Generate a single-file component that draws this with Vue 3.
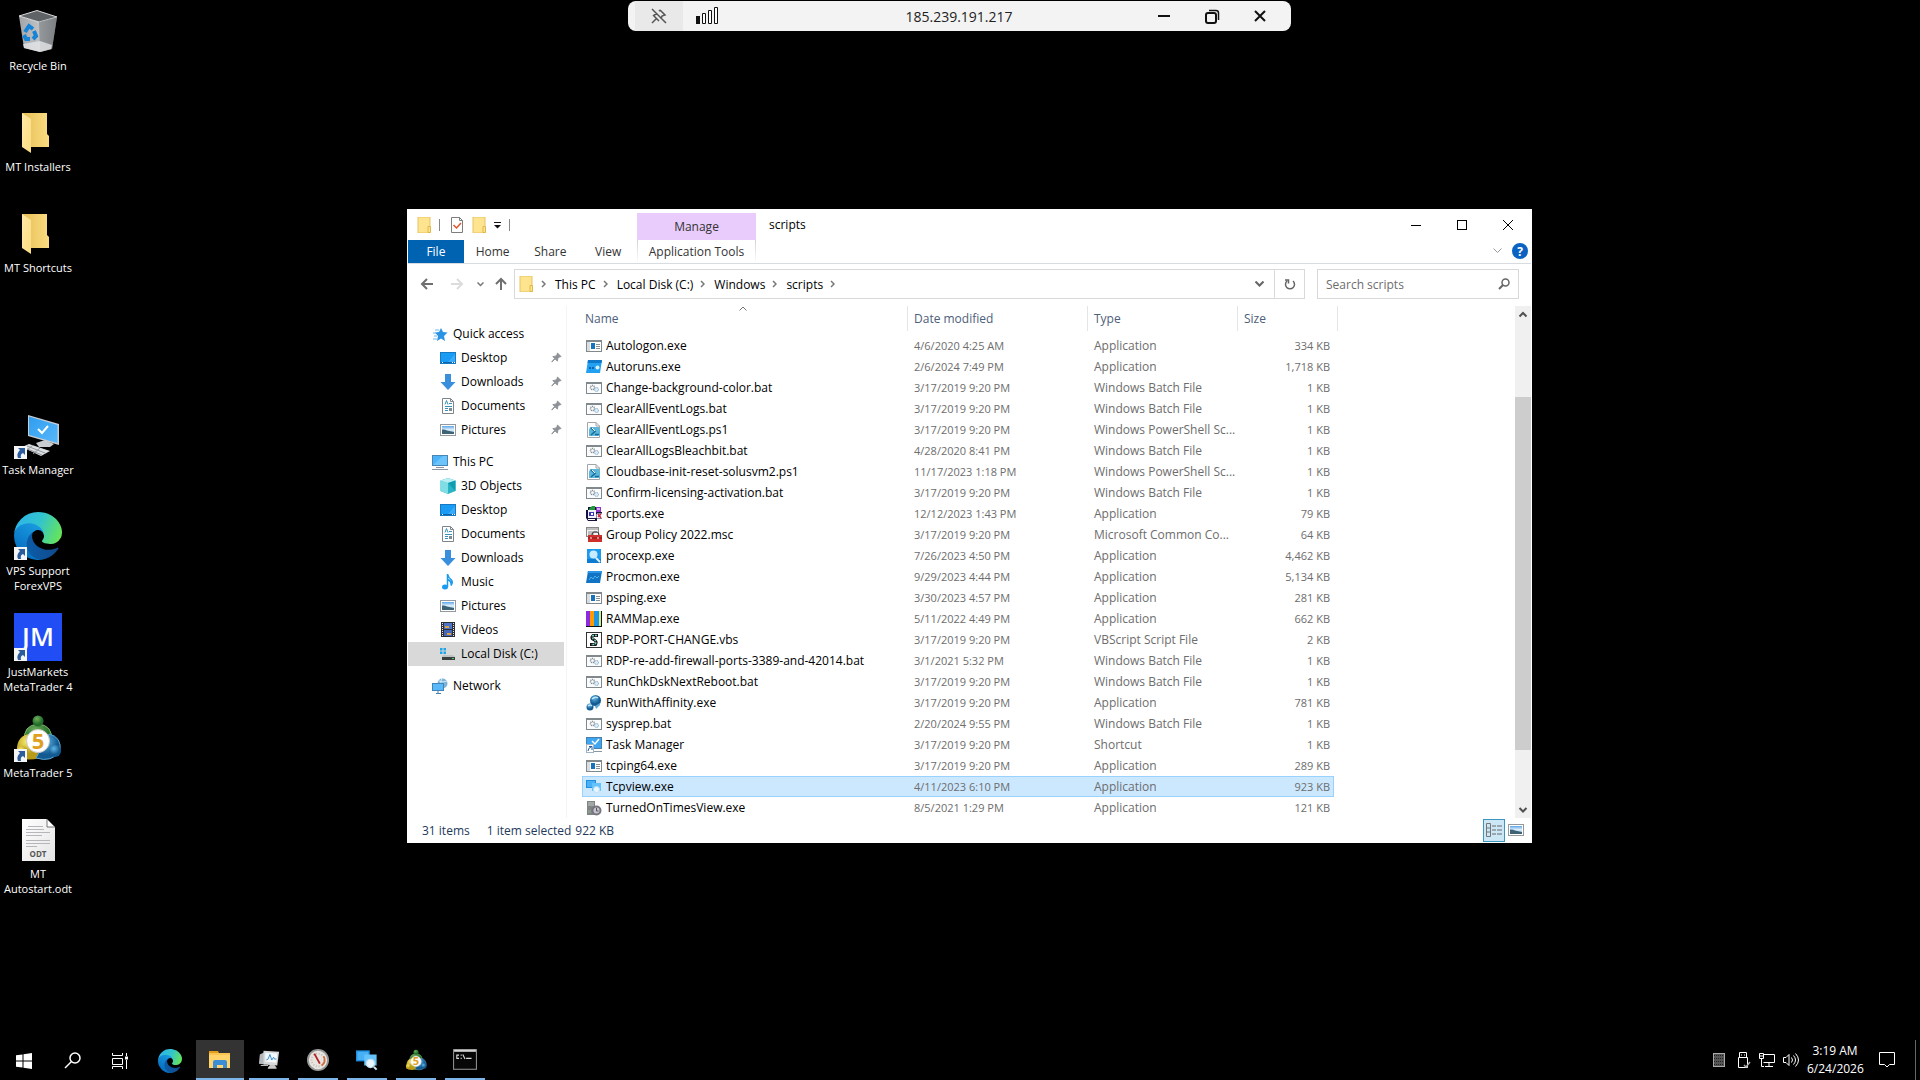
<script setup>
import { ref } from 'vue'

const shortcuts = [
  { label: 'Recycle Bin', icon: 'recycle' },
  { label: 'MT Installers', icon: 'folder-open' },
  { label: 'MT Shortcuts', icon: 'folder-open' },
  null,
  { label: 'Task Manager', icon: 'taskmgr', link: true },
  { label: 'VPS Support ForexVPS', icon: 'edge', link: true },
  { label: 'JustMarkets MetaTrader 4', icon: 'jm', mark: 'JM', link: true },
  { label: 'MetaTrader 5', icon: 'mt5', mark: '5', link: true },
  { label: 'MT Autostart.odt', icon: 'odt', mark: 'ODT' },
]

const tabs = ['Home', 'Share', 'View']
const crumbs = ['This PC', 'Local Disk (C:)', 'Windows', 'scripts']

const tree = [
  {
    label: 'Quick access', icon: 'star', children: [
      { label: 'Desktop', icon: 'desktop', pinned: true },
      { label: 'Downloads', icon: 'download', pinned: true },
      { label: 'Documents', icon: 'document', pinned: true },
      { label: 'Pictures', icon: 'picture', pinned: true },
    ],
  },
  {
    label: 'This PC', icon: 'pc', children: [
      { label: '3D Objects', icon: 'cube' },
      { label: 'Desktop', icon: 'desktop' },
      { label: 'Documents', icon: 'document' },
      { label: 'Downloads', icon: 'download' },
      { label: 'Music', icon: 'music' },
      { label: 'Pictures', icon: 'picture' },
      { label: 'Videos', icon: 'video' },
      { label: 'Local Disk (C:)', icon: 'disk', active: true },
    ],
  },
  { label: 'Network', icon: 'network', children: [] },
]

const APP = 'Application'
const BAT = 'Windows Batch File'
const PS = 'Windows PowerShell Sc...'
const files = [
  ['Autologon.exe', 'exe', '4/6/2020 4:25 AM', APP, '334 KB'],
  ['Autoruns.exe', 'autoruns', '2/6/2024 7:49 PM', APP, '1,718 KB'],
  ['Change-background-color.bat', 'bat', '3/17/2019 9:20 PM', BAT, '1 KB'],
  ['ClearAllEventLogs.bat', 'bat', '3/17/2019 9:20 PM', BAT, '1 KB'],
  ['ClearAllEventLogs.ps1', 'ps', '3/17/2019 9:20 PM', PS, '1 KB'],
  ['ClearAllLogsBleachbit.bat', 'bat', '4/28/2020 8:41 PM', BAT, '1 KB'],
  ['Cloudbase-init-reset-solusvm2.ps1', 'ps', '11/17/2023 1:18 PM', PS, '1 KB'],
  ['Confirm-licensing-activation.bat', 'bat', '3/17/2019 9:20 PM', BAT, '1 KB'],
  ['cports.exe', 'cports', '12/12/2023 1:43 PM', APP, '79 KB'],
  ['Group Policy 2022.msc', 'msc', '3/17/2019 9:20 PM', 'Microsoft Common Co...', '64 KB'],
  ['procexp.exe', 'procexp', '7/26/2023 4:50 PM', APP, '4,462 KB'],
  ['Procmon.exe', 'procmon', '9/29/2023 4:44 PM', APP, '5,134 KB'],
  ['psping.exe', 'exe', '3/30/2023 4:57 PM', APP, '281 KB'],
  ['RAMMap.exe', 'rammap', '5/11/2022 4:49 PM', APP, '662 KB'],
  ['RDP-PORT-CHANGE.vbs', 'vbs', '3/17/2019 9:20 PM', 'VBScript Script File', '2 KB'],
  ['RDP-re-add-firewall-ports-3389-and-42014.bat', 'bat', '3/1/2021 5:32 PM', BAT, '1 KB'],
  ['RunChkDskNextReboot.bat', 'bat', '3/17/2019 9:20 PM', BAT, '1 KB'],
  ['RunWithAffinity.exe', 'affinity', '3/17/2019 9:20 PM', APP, '781 KB'],
  ['sysprep.bat', 'bat', '2/20/2024 9:55 PM', BAT, '1 KB'],
  ['Task Manager', 'tmlink', '3/17/2019 9:20 PM', 'Shortcut', '1 KB'],
  ['tcping64.exe', 'exe', '3/17/2019 9:20 PM', APP, '289 KB'],
  ['Tcpview.exe', 'tcpview', '4/11/2023 6:10 PM', APP, '923 KB'],
  ['TurnedOnTimesView.exe', 'server', '8/5/2021 1:29 PM', APP, '121 KB'],
].map(([name, icon, date, type, size]) => ({ name, icon, date, type, size }))

const selected = ref('Tcpview.exe')
const search = ref('')

const running = [
  { label: 'Process monitor', icon: 'perfmon' },
  { label: 'Gauge', icon: 'gauge' },
  { label: 'TCPView', icon: 'tcpview' },
  { label: 'MetaTrader 5', icon: 'mt5', mark: '5' },
  { label: 'Command Prompt', icon: 'cmd' },
]
const tray = ['grid', 'usb', 'lan', 'sound']
</script>

<template>
  <div class="shell">
    <svg class="sprite" aria-hidden="true">
      <defs>
        <linearGradient id="g-bin" x1="0" x2="1"><stop offset="0" stop-color="#a3a6a9" /><stop offset=".55" stop-color="#c0c2c4" /><stop offset="1" stop-color="#83868a" /></linearGradient>
        <linearGradient id="g-flap" x1="0" x2="1" y2="1"><stop offset="0" stop-color="#ffe9a6" /><stop offset="1" stop-color="#fbdc82" /></linearGradient>
        <linearGradient id="g-fold" x1="0" x2="1"><stop offset="0" stop-color="#e6bf55" /><stop offset="1" stop-color="#fbdc82" /></linearGradient>
        <linearGradient id="g-scr" x1="0" x2="1" y2="1"><stop offset="0" stop-color="#2f9df0" /><stop offset="1" stop-color="#58b8fa" /></linearGradient>
        <linearGradient id="g-land" x1="0" y1="0" x2="0" y2="1"><stop offset="0" stop-color="#5fa6e8" /><stop offset=".45" stop-color="#dbeefb" /><stop offset="1" stop-color="#9cc1d6" /></linearGradient>
        <linearGradient id="g-e1" x1=".2" x2="1"><stop offset="0" stop-color="#0c59a4" /><stop offset="1" stop-color="#114a8b" /></linearGradient>
        <linearGradient id="g-e2" x1=".7" y1="0" x2=".2" y2="1"><stop offset="0" stop-color="#1b9de2" /><stop offset=".5" stop-color="#0f82cf" /><stop offset="1" stop-color="#0067b8" /></linearGradient>
        <linearGradient id="g-e3" x1="0" y1=".3" x2="1" y2=".6"><stop offset="0" stop-color="#2cb5ea" /><stop offset=".5" stop-color="#32c4cd" /><stop offset="1" stop-color="#66e45a" /></linearGradient>
        <radialGradient id="g-grn" cx=".4" cy=".3"><stop offset="0" stop-color="#6fae5c" /><stop offset="1" stop-color="#24702b" /></radialGradient>
        <radialGradient id="g-yel" cx=".4" cy=".3"><stop offset="0" stop-color="#f4e86c" /><stop offset="1" stop-color="#b89a17" /></radialGradient>
        <radialGradient id="g-blu" cx=".4" cy=".3"><stop offset="0" stop-color="#5fb6e6" /><stop offset="1" stop-color="#135a91" /></radialGradient>
        <linearGradient id="g-doc" x1="0" x2="1" y2="1"><stop offset="0" stop-color="#fff" /><stop offset="1" stop-color="#e4e4e4" /></linearGradient>
      </defs>

      <symbol id="i-recycle" viewBox="0 0 48 48">
        <path d="M5 9 25 15 43 10 38 42 26 45 10 41Z" fill="url(#g-bin)" />
        <path d="M5 9 23 3.500 43 10 25 15Z" fill="#606366" stroke="#dcdde0" />
        <path d="M25 15 26 45 38 42 43 10Z" fill="#777b7f" opacity=".6" />
        <path d="M9 37 26 34 38 38 37 42 26 45 10 41Z" fill="#e4e5e7" opacity=".8" />
        <g fill="none" stroke="#1483d8" stroke-width="4"><path d="M11 25l4-6 4 3M20 24l2 5-3 3M16 32h-4l-2-4" /></g>
      </symbol>
      <symbol id="i-folder-open" viewBox="0 0 48 48">
        <path d="M8 5H33V26L35 28V39H15Z" fill="url(#g-fold)" />
        <path d="M8 5 17 11V45L8 39Z" fill="url(#g-flap)" />
      </symbol>
      <symbol id="i-taskmgr" viewBox="0 0 48 48">
        <path d="M14 4 45 13V34L14 25Z" fill="#c8cdd2" />
        <path d="M15 5.500 43.500 14V32L15 24Z" fill="url(#g-scr)" />
        <path d="M24 18l4 4 6-7" fill="none" stroke="#fff" stroke-width="2" />
        <path d="M22 32 31 29 40 33 36 36H25Z" fill="#c9cdd1" />
        <path d="M15 33 36 40 27 45 8 36Z" fill="#dcdfe2" />
        <path d="M13 35 31 42M11 37 28 44M19 34 13 39M26 37 19 43" stroke="#92979c" />
      </symbol>
      <symbol id="i-edge" viewBox="0 0 256 256">
        <g transform="translate(-4.610 -4.920)"><path d="M235.680 195.490a93.730 93.730 0 0 1-10.540 4.710 101.870 101.870 0 0 1-35.900 6.460c-47.320 0-88.540-32.550-88.540-74.320A31.480 31.480 0 0 1 117.130 105c-42.800 1.800-53.800 46.400-53.800 72.530 0 73.880 68.090 81.370 82.760 81.370 7.910 0 19.840-2.300 27-4.560l1.310-.440a128.340 128.340 0 0 0 66.600-52.800 4 4 0 0 0-5.320-5.610z" fill="url(#g-e1)" /></g>
        <path d="M105.730 241.420a79.200 79.200 0 0 1-22.740-21.340 80.720 80.720 0 0 1 29.530-120c3.120-1.470 8.450-4.130 15.540-4a32.350 32.350 0 0 1 25.690 13 31.880 31.880 0 0 1 6.360 18.660c0-.210 24.460-79.600-80-79.600-43.900 0-80 41.660-80 78.210a130.150 130.150 0 0 0 12.110 56 128 128 0 0 0 156.380 67.110 75.550 75.550 0 0 1-62.780-8z" fill="url(#g-e2)" />
        <path d="M152.330 148.860c-.810 1.050-3.300 2.500-3.300 5.660 0 2.610 1.700 5.120 4.720 7.230 14.380 10 41.490 8.680 41.560 8.680a59.560 59.560 0 0 0 30.270-8.350A61.380 61.380 0 0 0 256 109.200c.260-22.410-8-37.310-11.340-43.910C223.460 23.840 177.720 0 128 0A128 128 0 0 0 0 126.200c.480-36.540 36.800-66.050 80-66.050 3.500 0 23.460.340 42 10.070 16.340 8.580 24.900 18.940 30.850 29.210 6.180 10.670 7.280 24.150 7.280 29.520s-2.740 13.330-7.800 19.910z" fill="url(#g-e3)" />
      </symbol>
      <symbol id="i-jm" viewBox="0 0 48 48"><rect width="48" height="48" fill="#204ef4" /></symbol>
      <symbol id="i-mt5" viewBox="0 0 48 48">
        <path d="M10 28Q9 11 24 10 39 11 38 28Z" fill="url(#g-grn)" stroke="#7fb870" />
        <path d="M3 42Q1 22 15 20L26 44Q10 48 3 42Z" fill="url(#g-yel)" />
        <path d="M46 37Q48 23 35 20L22 44Q38 49 46 37Z" fill="url(#g-blu)" stroke="#5aa6d4" />
        <circle cx="24" cy="7" r="5.500" fill="url(#g-grn)" />
        <circle cx="8" cy="38" r="6" fill="url(#g-yel)" />
        <circle cx="41" cy="37" r="6" fill="url(#g-blu)" />
        <circle cx="24" cy="27" r="11.500" fill="#fff" stroke="#c9c9c9" />
      </symbol>
      <symbol id="i-odt" viewBox="0 0 48 48">
        <path d="M8 4H33L41 12V46H8Z" fill="url(#g-doc)" />
        <path d="M33 4V12H41Z" fill="#fff" stroke="#555" stroke-width=".800" />
        <path d="M14 11.500H29M12 14.500H30M12 17.500H36M12 20.500H28M12 25.500H36M12 28.500H36M12 31.500H23" stroke="#b4b6bb" />
      </symbol>
      <symbol id="i-arrow" viewBox="0 0 13 13">
        <rect width="13" height="13" fill="#f5f5f5" />
        <path d="M4 2H11V9L9 7Q6 8 7 12H4Q2 8 6 4Z" fill="#2c5c9c" />
      </symbol>

      <symbol id="i-folder" viewBox="0 0 16 16">
        <path d="M2 0H14V16H2Z" fill="#ffe48f" stroke="#e5c365" />
        <path d="M12 9.500H14.500V15.500H12Z" fill="#ffe48f" stroke="#dfb84a" />
      </symbol>
      <symbol id="i-props" viewBox="0 0 16 16">
        <path d="M2.500.500H10.500L13.500 3.500V15.500H2.500Z" fill="#fff" stroke="#7d7d7d" />
        <path d="M10.500.500V3.500H13.500" fill="none" stroke="#7d7d7d" />
        <path d="M4.500 8l3 3 4.500-5" fill="none" stroke="#e0532b" stroke-width="1.500" />
      </symbol>
      <symbol id="i-star" viewBox="0 0 16 16">
        <path d="M9 2l2 4 4.500.500-3.500 3.500 1 5L9 12.500 5 15 6 10 3 6.500 7 6Z" fill="#2b93e4" />
        <path d="M3 4h4M1 7h3M2 10h3M1 13h4" stroke="#6db8ef" />
      </symbol>
      <symbol id="i-desktop" viewBox="0 0 16 16">
        <rect x=".500" y="2.500" width="15" height="11" fill="#1a9bf4" stroke="#1579c4" />
        <path d="M7 13 15 4V13Z" fill="#3aabfb" /><path d="M1 12.500H15" stroke="#0b64a8" /><path d="M2 12.500h1M12 12.500h1M14 12.500h1" stroke="#fff" />
      </symbol>
      <symbol id="i-download" viewBox="0 0 16 16"><path d="M5 0H11V8H15.500L8 16 .500 8H5Z" fill="#3a8fdd" /></symbol>
      <symbol id="i-document" viewBox="0 0 16 16">
        <path d="M2.500.500H10.500L13.500 3.500V15.500H2.500Z" fill="#fff" stroke="#7d868c" />
        <path d="M10.500.500V3.500H13.500" fill="none" stroke="#7d868c" />
        <path d="M5 6.500 6.500 2.500 8 6.500M9 5.500h3M5 8.500h7M5 10.500h3M5 12.500h3" stroke="#3b8fb8" fill="none" />
        <rect x="9" y="10" width="3" height="3" fill="#7a8c96" />
      </symbol>
      <symbol id="i-picture" viewBox="0 0 16 16">
        <rect x=".500" y="2.500" width="15" height="11" fill="#fff" stroke="#93999e" />
        <rect x="2" y="4" width="12" height="8" fill="url(#g-land)" />
        <path d="M2 7.500Q5 7 7 8.500L14 10V12H2Z" fill="#3e6377" />
      </symbol>
      <symbol id="i-pc" viewBox="0 0 16 16">
        <rect x=".500" y="1.500" width="15" height="10" fill="#4db3f8" stroke="#4786b4" />
        <path d="M1 11 11 2H15V11Z" fill="#6cc4fb" /><path d="M4 13.500h8M0 15.500h16" stroke="#8b93a0" />
      </symbol>
      <symbol id="i-cube" viewBox="0 0 16 16">
        <path d="M8 0 15.500 2.500V13L8 16 .500 13V2.500Z" fill="#29b3c4" />
        <path d="M.500 2.500 8 5V16L.500 13Z" fill="#7fdde6" /><path d="M8 0 15.500 2.500 8 5 .500 2.500Z" fill="#b9eef3" /><path d="M8 5 15.500 2.500V13Z" fill="#119db0" />
      </symbol>
      <symbol id="i-music" viewBox="0 0 16 16">
        <ellipse cx="5" cy="13" rx="3" ry="2.500" fill="#1a9bf0" /><path d="M7.500 13V0Q8 3 11 5.500 13.500 8 11 11.500 12 7.500 8 5.500" fill="none" stroke="#1a9bf0" stroke-width="1.500" />
      </symbol>
      <symbol id="i-video" viewBox="0 0 16 16">
        <rect x="1" y="0" width="14" height="15" fill="#2d2d35" />
        <rect x="4" y="1" width="8" height="6" fill="#4c74c8" /><rect x="4" y="8" width="8" height="6" fill="#4569b8" />
        <path d="M5 4h4v2H5ZM7 11h4v2H7Z" fill="#e3a13a" />
        <path d="M2.500 1V15M13.500 1V15" stroke="#e8e8e8" stroke-dasharray="1 1" />
      </symbol>
      <symbol id="i-disk" viewBox="0 0 16 16">
        <path d="M0 2h2.500v2.500H0ZM3.500 2H6v2.500H3.500ZM0 5.500h2.500V8H0ZM3.500 5.500H6V8H3.500Z" fill="#1fa6e8" />
        <path d="M3 9H13L15 11H2Z" fill="#bfc3c3" /><rect x="2" y="11" width="13" height="3" fill="#3b3f40" /><rect x="12" y="12" width="2" height="1" fill="#48d05c" />
      </symbol>
      <symbol id="i-network" viewBox="0 0 16 16">
        <circle cx="10.500" cy="5.500" r="5" fill="#7fb4d6" /><path d="M7 3q4 2 8 0M10 .500q-3 5 1 10" stroke="#d5ebf7" fill="none" />
        <rect x=".500" y="5.500" width="11" height="7" fill="#5bb9fa" stroke="#3d84ba" /><path d="M4 15.500h5M6 13v2" stroke="#4a7fa5" />
      </symbol>
      <symbol id="i-pin" viewBox="0 0 12 12"><path d="M7 1l4 4-2 .500L7.500 7 7 10 4.500 7.500 1 11 1 10.500 4 7 2 5l3-.500L6.500 3Z" fill="#8d9297" stroke="#8d9297" /></symbol>

      <symbol id="i-exe" viewBox="0 0 16 16">
        <rect x=".500" y="2.500" width="15" height="11" fill="#fff" stroke="#82898d" /><path d="M0 3h16" stroke="#82898d" stroke-width="2" />
        <rect x="1" y="4" width="3" height="9" fill="#d9dde0" /><rect x="5" y="5" width="4" height="6" fill="#1572bd" /><path d="M10 6.500h4M10 8.500h4M10 10.500h4" stroke="#888e92" />
      </symbol>
      <symbol id="i-bat" viewBox="0 0 16 16">
        <rect x=".500" y="2.500" width="15" height="11" fill="#fbfcfd" stroke="#82898d" /><path d="M0 3h16" stroke="#82898d" stroke-width="2" />
        <circle cx="6.500" cy="7.500" r="2" fill="none" stroke="#848d93" stroke-width="1.500" stroke-dasharray="1 .600" />
        <circle cx="10.500" cy="9.500" r="2" fill="#dcecf8" stroke="#82a9c6" stroke-dasharray="1 .500" />
      </symbol>
      <symbol id="i-ps" viewBox="0 0 16 16">
        <path d="M1.500.500H10L13.500 4V15.500H1.500Z" fill="#fff" stroke="#a0a6aa" /><path d="M10 .500V4H13.500" fill="none" stroke="#a0a6aa" />
        <path d="M4 5H13L14 8V13L12 14H3V8Z" fill="#5cb6da" /><path d="M5 6 9 9.500 5 13M9 12.500h4" stroke="#166c9c" stroke-width="1.500" fill="none" /><path d="M6 6 9 9" stroke="#fff" />
      </symbol>
      <symbol id="i-autoruns" viewBox="0 0 16 16">
        <path d="M2 1H16L14 14H0Z" fill="#22a0f2" /><path d="M2 1H16L15.500 4H1.500Z" fill="#0f78c8" /><path d="M3 8h2v2H3ZM6 8h2v2H6Z" fill="#0b65b5" /><circle cx="11.500" cy="8.500" r="2" fill="#d9f0ff" />
      </symbol>
      <symbol id="i-procmon" viewBox="0 0 16 16">
        <path d="M2 2H16L14 14H0Z" fill="#1173c4" /><path d="M2 2H16L15.500 4H1.500Z" fill="#2b95e6" /><path d="M3 11l2-3 2 2 2-3 2 2 2-2" fill="none" stroke="#4baeee" />
      </symbol>
      <symbol id="i-procexp" viewBox="0 0 16 16">
        <rect x="1" y="1" width="14" height="14" fill="#1b9af0" /><path d="M1 11h14v4H1Z" fill="#0d7cd0" /><circle cx="7.500" cy="6.500" r="4" fill="#c8ebff" /><path d="M10 10l4 4" stroke="#d9f1ff" stroke-width="2" />
      </symbol>
      <symbol id="i-cports" viewBox="0 0 16 16">
        <path d="M0 4H2V1H15V6H16V13H11V15H2L0 12Z" fill="#15123c" /><path d="M3 3 6 0H9V4H3Z" fill="#1f9b3a" /><rect x="10" y="1" width="5" height="5" fill="#8f35c9" /><rect x="11" y="2" width="3" height="2" fill="#d9b2f2" />
        <rect x="2" y="4" width="8" height="8" fill="#f1f1f8" /><rect x="3" y="6" width="5" height="4" fill="#3a35c2" /><rect x="5" y="7" width="2" height="2" fill="#fff" /><path d="M2 13.500h7M11 8h5v4h-5Z" stroke="#fff" fill="#fff" /><path d="M12 8l3 4M15 8l-3 3" stroke="#c42a4a" stroke-width="1.500" />
      </symbol>
      <symbol id="i-msc" viewBox="0 0 16 16">
        <rect x=".500" y=".500" width="12" height="9" fill="#f3f3f3" stroke="#888" /><path d="M0 2h13M2 5h9M2 7h6" stroke="#888" stroke-width="1" />
        <path d="M6 8Q6 5 8 5h3q2 0 2 3" fill="none" stroke="#333" /><rect x="2" y="8" width="14" height="7" fill="#cf2f2b" /><path d="M2 11h14" stroke="#8f1513" /><path d="M5 10v2M12 10v2" stroke="#fff" />
      </symbol>
      <symbol id="i-rammap" viewBox="0 0 16 16">
        <rect width="16" height="16" fill="#111" /><path d="M0 0h4v15H0Z" fill="#8a2be2" /><path d="M4 0h4v15H4Z" fill="#ff9a00" /><path d="M8 0h5v15H8Z" fill="#1e96e8" /><path d="M13 0h2v15h-2Z" fill="#d7ee7a" />
      </symbol>
      <symbol id="i-vbs" viewBox="0 0 16 16">
        <rect x=".500" y=".500" width="15" height="15" fill="#fff" stroke="#333" /><path d="M12 3.500H7Q4.500 6 7.500 7.500q4 2 2 5H4" fill="none" stroke="#111" stroke-width="3" /><path d="M11 3.500H7Q5.500 6 8 7.500q3 2 1 5H5" fill="none" stroke="#7fd6c9" stroke-dasharray="2 1" stroke-width="1.500" />
      </symbol>
      <symbol id="i-affinity" viewBox="0 0 16 16">
        <circle cx="9.500" cy="5.500" r="5.500" fill="url(#g-blu)" /><circle cx="4" cy="12" r="3.500" fill="url(#g-blu)" /><path d="M6 4q3-3 6-1M2 11q2-2 4 0" stroke="#bfe5f9" stroke-width="1.500" fill="none" /><path d="M9 11l5-3v2l-4 4Z" fill="#5fa5d3" />
      </symbol>
      <symbol id="i-tmlink" viewBox="0 0 16 16">
        <rect x=".500" y=".500" width="15" height="11" fill="#3ca6f2" stroke="#4b7fa8" /><path d="M6 4l3 3 4-5" stroke="#fff" fill="none" stroke-width="1.500" /><path d="M8 14.500h8" stroke="#8e979e" />
        <rect x=".500" y="7.500" width="7" height="8" fill="#fff" stroke="#9db3c6" /><path d="M2 14q0-3 3-4M3 9.500H6V13" fill="none" stroke="#1d5da8" />
      </symbol>
      <symbol id="i-tcpview" viewBox="0 0 16 16">
        <path d="M0 1h10v8H0Z" fill="#1e8fe0" /><path d="M1 2h8v6H1Z" fill="#4ab0f5" /><path d="M6 4h9v8H6Z" fill="#64c3fb" /><circle cx="10.500" cy="10.500" r="3" fill="#eaf7ff" stroke="#c2def0" /><path d="M13 13l2 2" stroke="#cfe6f5" stroke-width="1.500" />
      </symbol>
      <symbol id="i-server" viewBox="0 0 16 16">
        <path d="M1 1h8v14H1Z" fill="#7e8583" /><path d="M2 3h6M2 5h6" stroke="#c5cac8" /><path d="M2 10h3v3H2Z" fill="#8a9a8c" /><circle cx="10.500" cy="10.500" r="4" fill="#c6c6d0" stroke="#77757f" stroke-width="2" /><path d="M10.500 8v3h2" stroke="#555" fill="none" />
      </symbol>

      <symbol id="i-explorer" viewBox="0 0 22 22">
        <path d="M0 2h9l1 2H0Z" fill="#e09e1b" /><path d="M0 4h21v15H0Z" fill="#ffd46b" /><path d="M0 4h21v2H0Z" fill="#f9c552" /><path d="M4 19V13q0-2 2-2h10q2 0 2 2v6h-4v-3H8v3Z" fill="#3b8ed6" />
      </symbol>
      <symbol id="i-perfmon" viewBox="0 0 24 24">
        <path d="M2 6 8 3V17L1 16Z" fill="#b5b8ba" /><path d="M6 2 23 3 21 18 6 17Z" fill="#d6d8d9" /><path d="M8 4 21 5 20 15 8 14Z" fill="#f2f8fc" />
        <path d="M9 12l2-1 2-5 2 6 2-3 1 2h2" fill="none" stroke="#2f84c6" /><path d="M3 18h8M13 18h5l2 3h-9Z" fill="#c9cccd" stroke="#c9cccd" />
      </symbol>
      <symbol id="i-gauge" viewBox="0 0 24 24">
        <circle cx="12" cy="12" r="12" fill="#989898" /><circle cx="12" cy="12" r="10" fill="#e8e4df" /><circle cx="12" cy="12" r="7" fill="none" stroke="#c1b8ae" stroke-dasharray="1 2" stroke-width="2" />
        <path d="M8 5 14 16" stroke="#b32025" stroke-width="2" /><path d="M18 8a7 7 0 0 1-2 10" fill="none" stroke="#d46a3a" stroke-width="2" />
      </symbol>
      <symbol id="i-cmd" viewBox="0 0 22 20">
        <rect x=".500" y=".500" width="21" height="18" fill="#070707" stroke="#8b8b8b" /><path d="M1 1.500h20" stroke="#d4d4d4" stroke-width="2" />
        <path d="M5.500 5.500H3.500v3h2M7.500 5v1M7.500 8v1M9 5l2 4M12 8.500h5" stroke="#ddd" fill="none" />
      </symbol>

      <symbol id="i-grid" viewBox="0 0 16 16"><rect x="2" y="1" width="12" height="14" fill="#555" /><path d="M3 3.500h10M3 6.500h10M3 9.500h10M3 12.500h10" stroke="#222" stroke-dasharray="1 1" /><rect x="2.500" y="1.500" width="11" height="13" fill="none" stroke="#aaa" /></symbol>
      <symbol id="i-usb" viewBox="0 0 16 16"><path d="M4.500 5V.500h7V5M3.500 5.500h9v10h-9Z" fill="none" stroke="#fff" /><path d="M6 3h1M9 3h1" stroke="#fff" /><path d="M9 13l2 2 4-5" fill="none" stroke="#aaa" stroke-width="1.500" /></symbol>
      <symbol id="i-lan" viewBox="0 0 16 16"><path d="M5 2.500h10.500v8H4.500M10 11v3M6 14.500h8M2.500 7v7.500H5" fill="none" stroke="#fff" /><path d="M.500 1.500h4v5h-4ZM.500 4h4" fill="#000" stroke="#fff" /></symbol>
      <symbol id="i-sound" viewBox="0 0 16 16"><path d="M.500 5.500H3L6 2.500v11L3 10.500H.500ZM8.500 5.500q2 2.500 0 5M10.500 3.500q4 4.500 0 9M12.500 1.500q6 6.500 0 13" fill="none" stroke="#fff" /></symbol>
    </svg>

    <main class="desktop">
      <nav class="shortcuts" aria-label="Desktop">
        <div v-for="(s, i) in shortcuts" :key="i" class="slot">
          <button v-if="s" class="shortcut" type="button">
            <span class="big-icon">
              <svg width="48" height="48"><use :href="'#i-' + s.icon" /><text v-if="s.mark" x="24" :class="['mark', s.icon]" :y="{ jm: 33, mt5: 35, odt: 42 }[s.icon]">{{ s.mark }}</text></svg>
              <svg v-if="s.link" class="link-badge" width="13" height="13"><use href="#i-arrow" /></svg>
            </span>
            <span class="caption">{{ s.label }}</span>
          </button>
        </div>
      </nav>

      <header class="rdp">
        <button class="rdp-pin" type="button" aria-label="Pin">
          <svg width="18" height="18" viewBox="0 0 18 18" fill="none" stroke="#555" stroke-width="1.500"><path d="M2 2 16 16M2 16 6 12M10 3 15 8 12 9 11 12M3 8 9 14M7 7 4 8M9 4l1-1" /></svg>
        </button>
        <svg class="signal" width="24" height="18" viewBox="0 0 24 18"><path d="M0 9h4v8H0Z" fill="#111" /><path d="M6.500 6.500h3v10h-3ZM12.500 3.500h3v13h-3ZM18.500.500h3v16h-3Z" fill="#fff" stroke="#111" /></svg>
        <span class="rdp-host">185.239.191.217</span>
        <button class="rdp-btn" type="button" aria-label="Minimize"><svg width="14" height="14"><path d="M1 7H13" stroke="#111" stroke-width="2" /></svg></button>
        <button class="rdp-btn" type="button" aria-label="Restore"><svg width="15" height="15" fill="none" stroke="#111" stroke-width="2"><rect x="1" y="4" width="10" height="10" rx="2" /><path d="M4 1.500h7q2.500 0 2.500 2.500v7" stroke-width="1.500" /></svg></button>
        <button class="rdp-btn" type="button" aria-label="Close"><svg width="14" height="14"><path d="M2 2 12 12M12 2 2 12" stroke="#111" stroke-width="2" /></svg></button>
      </header>

      <section class="window" aria-label="scripts">
        <div class="ribbon">
          <div class="left">
            <div class="quickbar">
              <svg width="16" height="16"><use href="#i-folder" /></svg><i class="bar"></i>
              <svg width="16" height="16"><use href="#i-props" /></svg>
              <svg width="16" height="16"><use href="#i-folder" /></svg>
              <svg class="drop" width="8" height="8"><path d="M0 1.500h7" stroke="#111" /><path d="M0 4h7L3.500 7.500Z" fill="#111" /></svg><i class="bar"></i>
            </div>
            <div class="tabs">
              <button class="file-tab" type="button">File</button>
              <button v-for="t in tabs" :key="t" class="tab" type="button">{{ t }}</button>
            </div>
          </div>
          <div class="context">
            <span class="manage">Manage</span>
            <button class="tool-tab" type="button">Application Tools</button>
          </div>
          <h1 class="title">scripts</h1>
          <div class="right">
            <div class="controls">
              <button type="button" aria-label="Minimize"><svg width="10" height="10"><path d="M0 5.500h10" stroke="#000" /></svg></button>
              <button type="button" aria-label="Maximize"><svg width="10" height="10"><rect x=".500" y=".500" width="9" height="9" fill="none" stroke="#000" /></svg></button>
              <button type="button" aria-label="Close"><svg width="10" height="10"><path d="M0 0 10 10M10 0 0 10" stroke="#000" /></svg></button>
            </div>
            <div class="helpbar">
              <svg width="9" height="6"><path d="M.500.500l4 4 4-4" fill="none" stroke="#999" /></svg>
              <button class="help" type="button" aria-label="Help">?</button>
            </div>
          </div>
        </div>

        <div class="navbar">
          <button class="nav-btn" type="button" aria-label="Back"><svg width="14" height="12"><path d="M13 6H2M7 1 2 6 7 11" fill="none" stroke="#6f6f6f" stroke-width="2" /></svg></button>
          <button class="nav-btn" type="button" aria-label="Forward"><svg width="14" height="12"><path d="M1 6H12M7 1 12 6 7 11" fill="none" stroke="#dcdcdc" stroke-width="2" /></svg></button>
          <button class="nav-btn recent" type="button" aria-label="Recent"><svg width="7" height="5"><path d="M.500.500l3 3 3-3" fill="none" stroke="#777" stroke-width="1.500" /></svg></button>
          <button class="nav-btn up" type="button" aria-label="Up"><svg width="12" height="14"><path d="M6 13V2M1 7 6 2 11 7" fill="none" stroke="#6f6f6f" stroke-width="2" /></svg></button>
          <div class="address">
            <svg width="16" height="16"><use href="#i-folder" /></svg>
            <svg class="chev" width="5" height="8"><path d="M1 1l3 3-3 3" fill="none" stroke="#777" stroke-width="1.500" /></svg>
            <template v-for="c in crumbs" :key="c">
              <button class="crumb" type="button">{{ c }}</button>
              <svg class="chev" width="5" height="8"><path d="M1 1l3 3-3 3" fill="none" stroke="#777" stroke-width="1.500" /></svg>
            </template>
            <svg class="history" width="9" height="6"><path d="M.500.500l4 4 4-4" fill="none" stroke="#666" stroke-width="2" /></svg>
            <button class="refresh" type="button" aria-label="Refresh"><svg width="12" height="12" fill="none" stroke="#666" stroke-width="1.500"><path d="M9 3A4.500 4.500 0 1 1 3 3M1 2h3.500v3.500" /></svg></button>
          </div>
          <label class="search">
            <input v-model="search" type="text" placeholder="Search scripts" aria-label="Search scripts" />
            <svg width="12" height="12" fill="none" stroke="#666" stroke-width="1.500"><circle cx="7.500" cy="4.500" r="3.500" /><path d="M5 7 1 11" stroke-width="2" /></svg>
          </label>
        </div>

        <div class="body">
          <nav class="tree" aria-label="Folders">
            <div v-for="g in tree" :key="g.label" class="group">
              <button class="node" type="button"><svg width="16" height="16"><use :href="'#i-' + g.icon" /></svg>{{ g.label }}</button>
              <button v-for="n in g.children" :key="n.label" class="node child" :class="{ active: n.active }" type="button">
                <svg width="16" height="16"><use :href="'#i-' + n.icon" /></svg>{{ n.label }}
                <svg v-if="n.pinned" class="pin" width="11" height="11"><use href="#i-pin" /></svg>
              </button>
            </div>
          </nav>

          <div class="list">
            <table>
              <colgroup><col class="c-name" /><col class="c-date" /><col class="c-type" /><col class="c-size" /></colgroup>
              <thead>
                <tr>
                  <th scope="col"><div class="name-head">Name<svg class="sort" width="8" height="5"><path d="M.500 4.500l3.500-3.500 3.500 3.500" fill="none" stroke="#777" /></svg></div></th>
                  <th scope="col"><div>Date modified</div></th>
                  <th scope="col"><div>Type</div></th>
                  <th scope="col"><div class="size-head">Size</div></th>
                </tr>
              </thead>
              <tbody>
                <tr v-for="f in files" :key="f.name" :class="{ selected: f.name === selected }" @click="selected = f.name">
                  <td><div class="file"><svg width="16" height="16"><use :href="'#i-' + f.icon" /></svg>{{ f.name }}</div></td>
                  <td class="num">{{ f.date }}</td>
                  <td>{{ f.type }}</td>
                  <td class="num size">{{ f.size }}</td>
                </tr>
              </tbody>
            </table>
          </div>

          <div class="scroll">
            <svg width="16" height="17"><path d="M4.500 10.500 8 7l3.500 3.500" fill="none" stroke="#505050" stroke-width="2" /></svg>
            <div class="track"><div class="thumb"></div></div>
            <svg width="16" height="17"><path d="M4.500 7 8 10.500 11.500 7" fill="none" stroke="#505050" stroke-width="2" /></svg>
          </div>
        </div>

        <footer class="status">
          <span>31 items</span><span class="picked">1 item selected</span><span>922 KB</span>
          <button class="view on" type="button" aria-label="Details"><svg width="16" height="14" fill="none"><path d="M.500.500h4v13h-4ZM.500 5h4M.500 9h4" stroke="#777" /><path d="M6 3h4M11 3h5M6 7h4M11 7h5M6 11h4M11 11h5" stroke="#666" /></svg></button>
          <button class="view" type="button" aria-label="Large icons"><svg width="16" height="16"><use href="#i-picture" /></svg></button>
        </footer>
      </section>
    </main>

    <footer class="taskbar">
      <button class="task start" type="button" aria-label="Start"><svg width="16" height="16" fill="#fff"><path d="M0 2.300 6.500 1.400V7.500H0ZM7.500 1.200 16 0V7.500H7.500ZM0 8.500H6.500V14.600L0 13.700ZM7.500 8.500H16V16L7.500 14.800Z" /></svg></button>
      <button class="task start" type="button" aria-label="Search"><svg width="17" height="17" fill="none" stroke="#fff" stroke-width="1.500"><circle cx="11" cy="6" r="5" /><path d="M7.500 9.500 1 16" /></svg></button>
      <button class="task start" type="button" aria-label="Task view"><svg width="17" height="16" fill="none" stroke="#fff"><path d="M.500 0V2.500h10V0M.500 5.500h10v6H.500ZM.500 16V13.500h10V16M14.500 0V3M14.500 7V16" /><path d="M13 3.500h3v3h-3Z" fill="#fff" stroke="none" /></svg></button>
      <button class="task browser" type="button" aria-label="Edge"><svg width="24" height="24"><use href="#i-edge" /></svg></button>
      <button class="task current" type="button" aria-label="File Explorer"><svg width="22" height="22"><use href="#i-explorer" /></svg></button>
      <button v-for="r in running" :key="r.label" class="task open" type="button" :aria-label="r.label"><svg width="24" height="22"><use :href="'#i-' + r.icon" /><text v-if="r.mark" class="mark small" x="12" y="16">{{ r.mark }}</text></svg></button>
      <div class="tray">
        <svg v-for="t in tray" :key="t" width="16" height="16"><use :href="'#i-' + t" /></svg>
        <time class="clock" datetime="2026-06-24T03:19"><span>3:19 AM</span><span>6/24/2026</span></time>
        <button class="notice" type="button" aria-label="Notifications"><svg width="16" height="16"><path d="M.500.500h15v12h-5L8 15 5.500 12.500h-5Z" fill="none" stroke="#fff" /></svg></button>
        <i class="peek"></i>
      </div>
    </footer>
  </div>
</template>

<style>
body { margin: 0; background: #000; }
</style>

<style scoped>
.shell { display: flex; flex-direction: column; min-height: 100vh; background: #000; color: #000; font: 12px/15px "Open Sans", "Noto Sans", sans-serif; }
.shell * { box-sizing: border-box; }
.sprite { position: absolute; width: 0; height: 0; }
svg { display: block; flex: none; }
button { margin: 0; padding: 0; border: 0; background: none; color: inherit; font: inherit; }
.desktop { position: relative; flex: 1; }

.shortcuts { display: flex; flex-direction: column; width: 76px; padding-top: 7px; }
.slot { height: 101px; }
.shortcut { display: flex; flex-direction: column; align-items: center; gap: 3px; width: 100%; color: #fff; font-size: 11px; }
.big-icon { position: relative; }
.link-badge { position: absolute; left: 0; bottom: 0; }
.caption { width: 100%; text-align: center; }
.mark { text-anchor: middle; font-weight: 700; }
.jm { fill: #fff; font-size: 26px; font-weight: 600; }
.mt5 { fill: #dfa01f; font-size: 22px; }
.odt { fill: #555; font-size: 8px; }
.small { fill: #dfa01f; font-size: 11px; }

.rdp { position: absolute; top: 1px; left: 628px; right: 629px; display: flex; align-items: center; height: 30px; padding: 0 7px; border-radius: 8px; background: #f3f3f3; color: #222; }
.rdp-pin { display: grid; place-items: center; width: 48px; height: 100%; background: #e9e9e9; }
.signal { margin-left: 13px; }
.rdp-host { flex: 1; padding-left: 58px; text-align: center; font-size: 14px; }
.rdp-btn { display: grid; place-items: center; width: 48px; height: 100%; }

.window { position: absolute; top: 209px; left: 407px; right: 388px; border: 1px solid #fff; background: #fff; }
.ribbon { display: flex; height: 54px; border-bottom: 1px solid #d8dbe0; }
.left { display: flex; flex-direction: column; width: 229px; }
.quickbar { display: flex; align-items: center; height: 29px; padding-left: 8px; gap: 6px; }
.bar { width: 1px; height: 12px; margin: 0 3px 0 1px; background: #888; }
.drop { margin-left: 1px; }
.tabs { display: flex; height: 23px; margin-top: 1px; color: #333; }
.file-tab { width: 56px; background: #0063b1; color: #fff; }
.tab { width: 58px; }
.context { display: flex; flex-direction: column; width: 119px; padding-top: 3px; color: #333; }
.manage { height: 27px; line-height: 27px; text-align: center; background: #e9ccfb; }
.tool-tab { flex: 1; border: 1px solid; border-width: 0 1px; border-image: linear-gradient(#d0d0d0, #fff) 1; }
.title { margin: 0; padding-left: 13px; font-size: 12px; font-weight: 400; line-height: 30px; }
.right { margin-left: auto; }
.controls { display: flex; height: 29px; margin-bottom: 1px; }
.controls button { display: grid; place-items: center; width: 46px; }
.helpbar { display: flex; align-items: center; justify-content: flex-end; gap: 10px; height: 22px; padding-right: 3px; }
.help { width: 16px; height: 16px; border-radius: 50%; background: #0a63c2; color: #fff; font-weight: 700; }

.navbar { display: flex; height: 42px; padding: 5px 12px 7px 4px; }
.nav-btn { display: grid; place-items: center; width: 30px; }
.recent { width: 16px; }
.up { width: 26px; }
.address { display: flex; flex: 1; align-items: center; padding-left: 3px; border: 1px solid #d9d9d9; }
.address .chev { margin-left: 7px; }
.crumb { margin-left: 9px; }
.address .history { margin-left: auto; margin-right: 10px; }
.refresh { display: grid; place-items: center; width: 30px; height: 100%; border-left: 1px solid #d9d9d9; }
.search { display: flex; align-items: center; width: 202px; margin-left: 12px; padding: 0 8px; border: 1px solid #d9d9d9; }
.search input { flex: 1; min-width: 0; padding: 0; border: 0; outline: 0; background: none; color: #555; font: inherit; }
.search input::placeholder { color: #6d6d6d; opacity: 1; }

.body { display: flex; }
.tree { width: 159px; padding-top: 16px; border-right: 1px solid #f4f4f4; }
.group { margin-bottom: 8px; }
.node { display: flex; align-items: center; gap: 5px; width: 156px; height: 24px; padding: 0 0 1px 24px; }
.child { padding-left: 32px; }
.node.active { background: #d9d9d9; }
.pin { margin: 0 2px 0 auto; }

.list { flex: 1; min-width: 0; padding-left: 15px; }
table { width: 752px; border-spacing: 0; table-layout: fixed; color: #6d6d6d; }
.c-name { width: 326px; }
.c-date { width: 180px; }
.c-type { width: 150px; }
.c-size { width: 96px; }
th { height: 29px; padding: 0; text-align: left; vertical-align: top; font-weight: 400; color: #4c607a; }
th div { height: 25px; padding-left: 6px; line-height: 26px; border-right: 1px solid #e5e5e5; }
th .name-head { position: relative; padding-left: 3px; }
.sort { position: absolute; top: 0; left: 157px; }
th .size-head { width: 100px; }
td { height: 21px; padding: 0 6px; line-height: 21px; white-space: nowrap; }
td:first-child { padding-left: 4px; color: #000; }
.file { display: flex; align-items: center; gap: 4px; }
.num { font-size: 11px; }
.size { padding-right: 4px; text-align: right; }
.selected td { background: #cce8ff; box-shadow: inset 0 1px #99d1ff, inset 0 -1px #99d1ff; }
.selected td:first-child { box-shadow: inset 1px 1px #99d1ff, inset 0 -1px #99d1ff; }
.selected td:last-child { box-shadow: inset -1px 1px #99d1ff, inset 0 -1px #99d1ff; }

.scroll { display: flex; flex-direction: column; width: 16px; background: #f0f0f0; }
.track { display: flex; flex: 1; flex-direction: column; }
.track::before { flex: 74; content: ""; }
.track::after { flex: 51; content: ""; }
.thumb { flex: 353; background: #cdcdcd; }

.status { display: flex; align-items: center; height: 24px; padding: 0 4px 0 14px; color: #1e395b; }
.picked { margin: 0 4px 0 17px; }
.view { display: grid; place-items: center; width: 22px; height: 23px; }
.view.on { margin-left: auto; border: 1px solid #3c96bd; background: #cce8f6; }

.taskbar { display: flex; height: 40px; color: #fff; }
.task { display: grid; place-items: center; }
.task svg { margin-top: 1px; }
.start { width: 48px; }
.browser { width: 52px; }
.current { width: 48px; background: #333; border-bottom: 2px solid #7cb5ea; }
.open { width: 40px; margin-left: 9px; border-bottom: 2px solid #7cb5ea; }
.current + .open { margin-left: 5px; }
.tray { display: flex; align-items: center; gap: 8px; margin-left: auto; padding-right: 4px; }
.clock { display: flex; flex-direction: column; width: 56px; text-align: center; line-height: 18px; }
.notice { display: grid; place-items: center; width: 32px; height: 40px; margin-right: 4px; }
.peek { width: 1px; height: 40px; background: #666; }
</style>
